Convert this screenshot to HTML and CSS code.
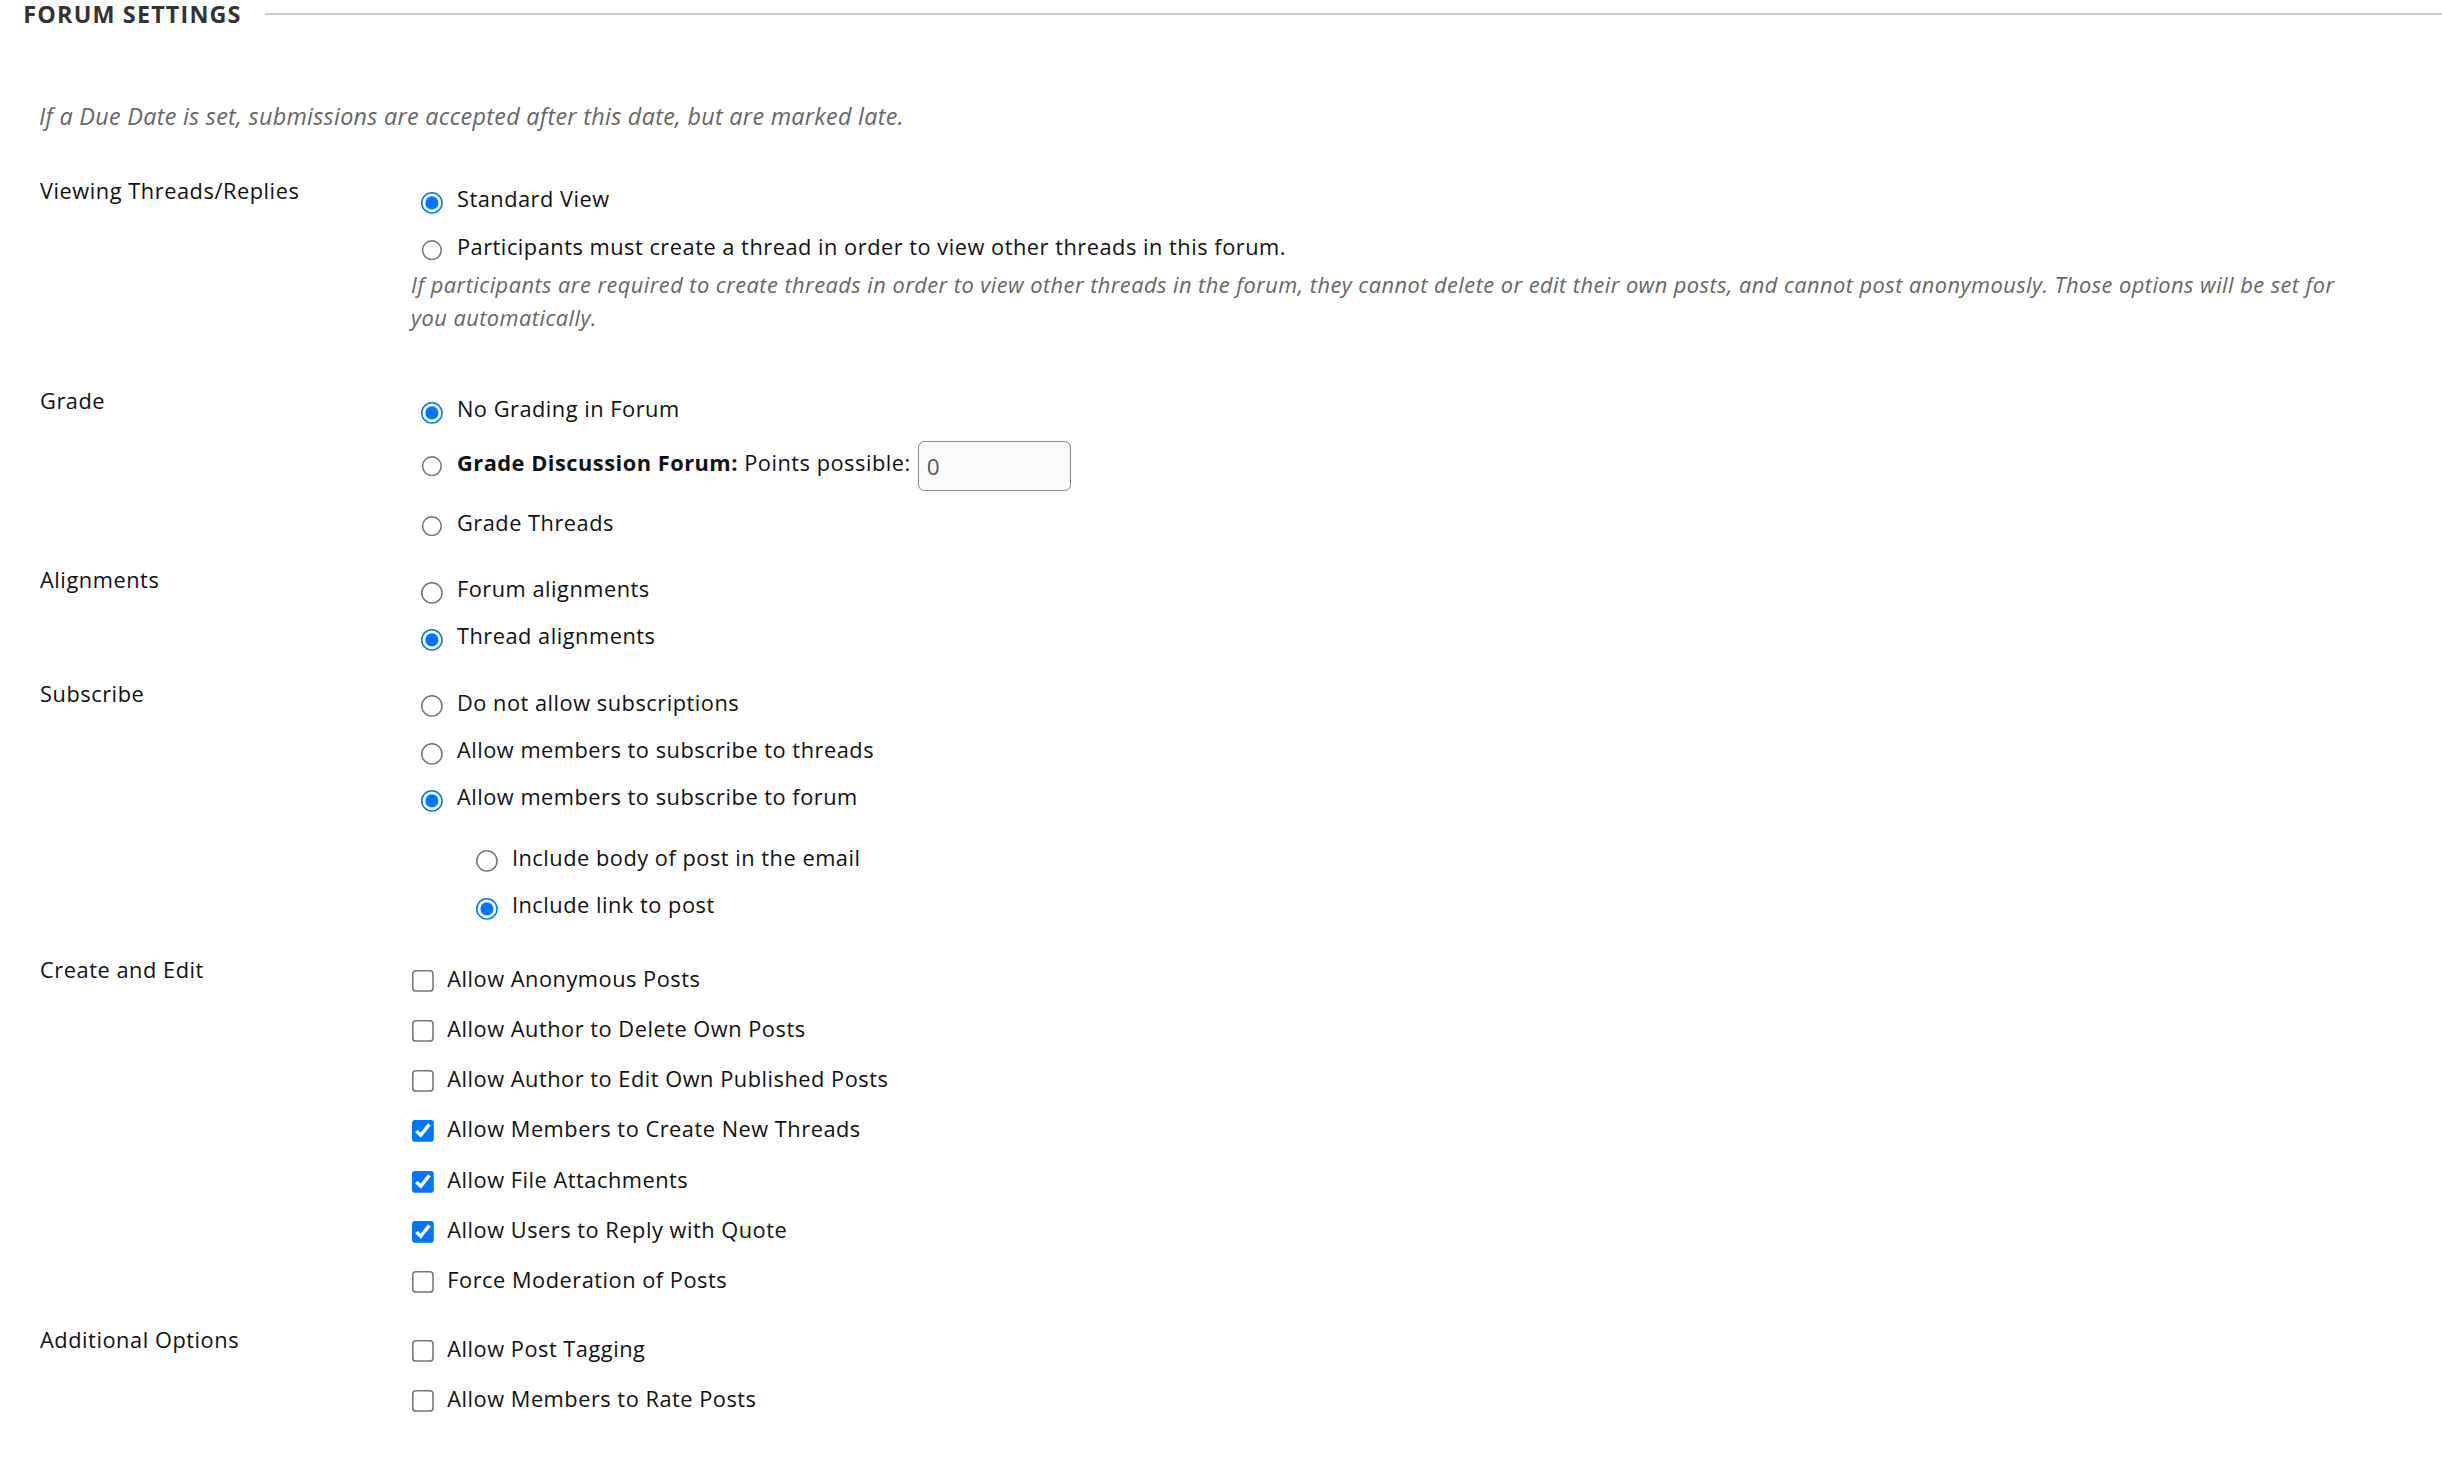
FILE: index.html
```html
<!DOCTYPE html>
<html lang="en">
<head>
<meta charset="utf-8">
<title>Forum Settings</title>
<link rel="stylesheet" href="styles.css">
</head>
<body>
<div class="page">
  <div class="section-head">
    <h2 class="section-title">FORUM SETTINGS</h2>
    <span class="rule"></span>
  </div>
  <p class="note">If a Due Date is set, submissions are accepted after this date, but are marked late.</p>
  <ul class="fields">
    <li class="field">
      <div class="field-label">Viewing Threads/Replies</div>
      <div class="field-body">
        <label class="opt"><input type="radio" name="view" checked><span class="opt-text">Standard View</span></label>
        <label class="opt"><input type="radio" name="view"><span class="opt-text">Participants must create a thread in order to view other threads in this forum.</span></label>
        <p class="help">If participants are required to create threads in order to view other threads in the forum, they cannot delete or edit their own posts, and cannot post anonymously. Those options will be set for you automatically.</p>
      </div>
    </li>
    <li class="field">
      <div class="field-label">Grade</div>
      <div class="field-body">
        <label class="opt"><input type="radio" name="grade" checked><span class="opt-text">No Grading in Forum</span></label>
        <div class="opt has-input"><input type="radio" name="grade"><span class="opt-text"><strong>Grade Discussion Forum:</strong> Points possible:</span><input class="points" type="text" value="0"></div>
        <label class="opt"><input type="radio" name="grade"><span class="opt-text">Grade Threads</span></label>
      </div>
    </li>
    <li class="field">
      <div class="field-label">Alignments</div>
      <div class="field-body">
        <label class="opt"><input type="radio" name="align"><span class="opt-text">Forum alignments</span></label>
        <label class="opt"><input type="radio" name="align" checked><span class="opt-text">Thread alignments</span></label>
      </div>
    </li>
    <li class="field">
      <div class="field-label">Subscribe</div>
      <div class="field-body">
        <label class="opt"><input type="radio" name="sub"><span class="opt-text">Do not allow subscriptions</span></label>
        <label class="opt"><input type="radio" name="sub"><span class="opt-text">Allow members to subscribe to threads</span></label>
        <label class="opt"><input type="radio" name="sub" checked><span class="opt-text">Allow members to subscribe to forum</span></label>
        <div class="sub">
          <label class="opt"><input type="radio" name="subopt"><span class="opt-text">Include body of post in the email</span></label>
          <label class="opt"><input type="radio" name="subopt" checked><span class="opt-text">Include link to post</span></label>
        </div>
      </div>
    </li>
    <li class="field">
      <div class="field-label">Create and Edit</div>
      <div class="field-body">
        <label class="opt check"><input type="checkbox"><span class="opt-text">Allow Anonymous Posts</span></label>
        <label class="opt check"><input type="checkbox"><span class="opt-text">Allow Author to Delete Own Posts</span></label>
        <label class="opt check"><input type="checkbox"><span class="opt-text">Allow Author to Edit Own Published Posts</span></label>
        <label class="opt check"><input type="checkbox" checked><span class="opt-text">Allow Members to Create New Threads</span></label>
        <label class="opt check"><input type="checkbox" checked><span class="opt-text">Allow File Attachments</span></label>
        <label class="opt check"><input type="checkbox" checked><span class="opt-text">Allow Users to Reply with Quote</span></label>
        <label class="opt check"><input type="checkbox"><span class="opt-text">Force Moderation of Posts</span></label>
      </div>
    </li>
    <li class="field">
      <div class="field-label">Additional Options</div>
      <div class="field-body">
        <label class="opt check"><input type="checkbox"><span class="opt-text">Allow Post Tagging</span></label>
        <label class="opt check"><input type="checkbox"><span class="opt-text">Allow Members to Rate Posts</span></label>
      </div>
    </li>
  </ul>
</div>
</body>
</html>
```

FILE: styles.css
```css
html, body {
  margin: 0;
  padding: 0;
  background: #ffffff;
}

body {
  font-family: "Open Sans", "Noto Sans", sans-serif;
  color: #111111;
}

.page {
  zoom: 1.557;
}

.section-head {
  display: flex;
  align-items: center;
  height: 18px;
  padding-left: 15px;
}

.section-title {
  margin: 0;
  font-size: 15px;
  line-height: 18px;
  font-weight: 700;
  letter-spacing: 0.75px;
  color: #333333;
  white-space: nowrap;
}

.rule {
  flex: 1;
  height: 1px;
  margin-left: 15px;
  background: #cccccc;
}

.note {
  margin: 45.8px 0 0;
  padding-left: 25px;
  font-size: 15px;
  line-height: 22.5px;
  font-style: italic;
  letter-spacing: 0.19px;
  color: #666666;
}

.fields {
  list-style: none;
  margin: 25.8px 0 0;
  padding: 0 45px 0 25.7px;
}

.field {
  display: flex;
}

.field + .field {
  margin-top: 12px;
}

.field-label {
  flex: none;
  width: 238.3px;
  font-size: 14px;
  line-height: 21px;
  letter-spacing: 0.35px;
}

.field-body {
  flex: 1;
  min-width: 0;
}

.opt {
  display: flex;
  align-items: flex-start;
  padding: 5.6px 0 3.9px;
  font-size: 14px;
  line-height: 21px;
  letter-spacing: 0.33px;
  cursor: default;
}

.opt input[type="radio"] {
  flex: none;
  width: 14px;
  height: 14px;
  margin: 5.7px 9px 0 6.5px;
  accent-color: #0075ff;
}

.opt.check {
  padding: 5.6px 0 5.7px;
}

.opt input[type="checkbox"] {
  flex: none;
  width: 14.5px;
  height: 14.5px;
  margin: 4.5px 8px 0 0.8px;
  accent-color: #0075ff;
}

.opt strong {
  font-weight: 700;
}

.opt.has-input {
  padding: 5.6px 0 4.2px;
}

.opt.has-input input[type="radio"] {
  margin-top: 9.5px;
}

.opt.has-input .opt-text {
  margin-top: 3.8px;
}

.points {
  flex: none;
  box-sizing: border-box;
  width: 98px;
  height: 32.5px;
  margin: 0 0 0 4.7px;
  padding: 0 5px;
  border: 1px solid #8a8a8a;
  border-radius: 4px;
  background: #fafafa;
  font-family: "Open Sans", "Noto Sans", sans-serif;
  font-size: 14.5px;
  color: #555555;
}

.help {
  margin: 0 0 20px;
  font-size: 14px;
  line-height: 21px;
  font-style: italic;
  letter-spacing: 0.3px;
  color: #666666;
}

.sub {
  padding: 8.1px 0 4.7px 35.3px;
}
```
